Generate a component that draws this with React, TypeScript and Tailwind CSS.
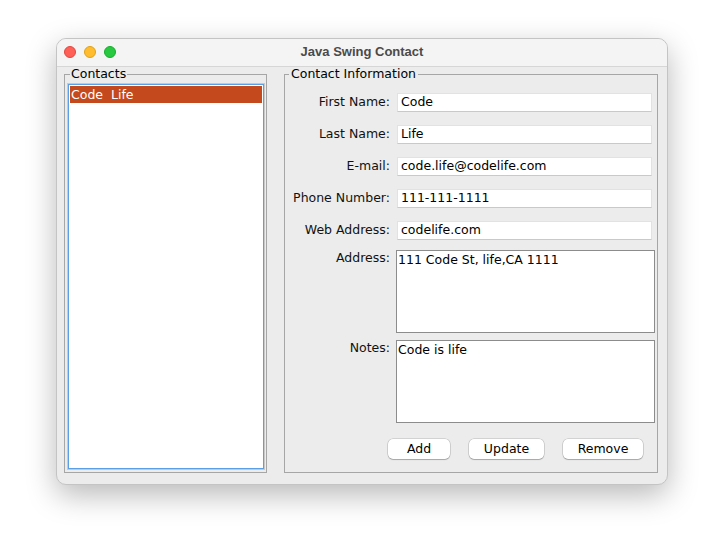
import React from 'react';

const font = { fontFamily: '"DejaVu Sans", "Lucida Grande", sans-serif' };

const fields = [
  { label: 'First Name:', value: 'Code' },
  { label: 'Last Name:', value: 'Life' },
  { label: 'E-mail:', value: 'code.life@codelife.com' },
  { label: 'Phone Number:', value: '111-111-1111' },
  { label: 'Web Address:', value: 'codelife.com' },
];

function TextField({ label, value }: { label: string; value: string }) {
  return (
    <div className="flex items-center h-[19px]">
      <span className="w-[105px] shrink-0 text-right text-[12.5px] text-[#111]">{label}</span>
      <div className="ml-[7px] mr-[5px] flex-1 h-[19px] bg-white border border-[#e2e2e2] border-b-[#c9c9c9] flex items-center pl-[3px] text-[12.5px] text-black">
        {value}
      </div>
    </div>
  );
}

function TextArea({ label, value }: { label: string; value: string }) {
  return (
    <div className="flex items-start">
      <span className="w-[105px] shrink-0 text-right text-[12.5px] leading-[16px] text-[#111]">{label}</span>
      <div className="ml-[6px] mr-[2px] flex-1 h-[83px] bg-white border border-[#8c8c8c] pl-[1px] pt-[1px] text-[12.5px] leading-[16px] text-black">
        {value}
      </div>
    </div>
  );
}

export default function App() {
  return (
    <div className="w-[723px] h-[560px] bg-white pt-[38px] pl-[56px]" style={font}>
      <div className="w-[612px] h-[447px] rounded-[10px] border border-[#c4c4c4] bg-[#ececec] overflow-hidden shadow-[0_10px_30px_rgba(0,0,0,0.28)] flex flex-col">
        <div className="relative h-[28px] shrink-0 bg-[#f4f4f4] border-b border-[#d6d6d6] flex items-center justify-center">
          <div className="absolute left-[7px] top-[7px] flex gap-[8px]">
            <span className="w-[12px] h-[12px] rounded-full bg-[#fe5f57] border border-[#e2463f]" />
            <span className="w-[12px] h-[12px] rounded-full bg-[#febc2e] border border-[#e1a116]" />
            <span className="w-[12px] h-[12px] rounded-full bg-[#28c840] border border-[#14ae2a]" />
          </div>
          <span className="-mt-[2px] text-[13px] font-bold text-[#4a4a4a]" style={{ fontFamily: '"Liberation Sans", Arial, sans-serif' }}>
            Java Swing Contact
          </span>
        </div>

        <div className="flex-1 flex px-[7px] pb-[11px] gap-[17px]">
          <fieldset className="w-[203px] border border-[#a6a6a6] pl-[3px] pr-[2px] pt-[3px] pb-[3px] flex flex-col min-h-0">
            <legend className="ml-[2px] px-[1px] text-[12.5px] leading-[14px] text-black">Contacts</legend>
            <div className="flex-1 bg-white border border-[#5b9fe4] outline outline-1 outline-[#c9c9c9] p-[1px]">
              <div className="h-[17px] bg-[#c4491c] text-white text-[12.5px] leading-[17px] pl-[1px] whitespace-pre">Code  Life</div>
            </div>
          </fieldset>

          <fieldset className="w-[374px] border border-[#a6a6a6] pt-[12px] min-h-0">
            <legend className="ml-[4px] px-[2px] text-[12.5px] leading-[14px] text-black">Contact Information</legend>
            <div className="flex flex-col gap-[13px]">
              {fields.map((f) => (
                <TextField key={f.label} label={f.label} value={f.value} />
              ))}
            </div>
            <div className="mt-[10px] flex flex-col gap-[7px]">
              <TextArea label="Address:" value="111 Code St, life,CA 1111" />
              <TextArea label="Notes:" value="Code is life" />
            </div>
            <div className="mt-[16px] ml-[103px] flex gap-[19px]">
              {[
                { t: 'Add', w: 'w-[62px]' },
                { t: 'Update', w: 'w-[75px]' },
                { t: 'Remove', w: 'w-[80px]' },
              ].map((b) => (
                <button
                  key={b.t}
                  className={`${b.w} h-[20px] bg-white rounded-[5px] text-[12.5px] text-black leading-[20px] shadow-[0_0_0_0.5px_rgba(0,0,0,0.22),0_1px_1px_rgba(0,0,0,0.2)]`}
                >
                  {b.t}
                </button>
              ))}
            </div>
          </fieldset>
        </div>
      </div>
    </div>
  );
}
